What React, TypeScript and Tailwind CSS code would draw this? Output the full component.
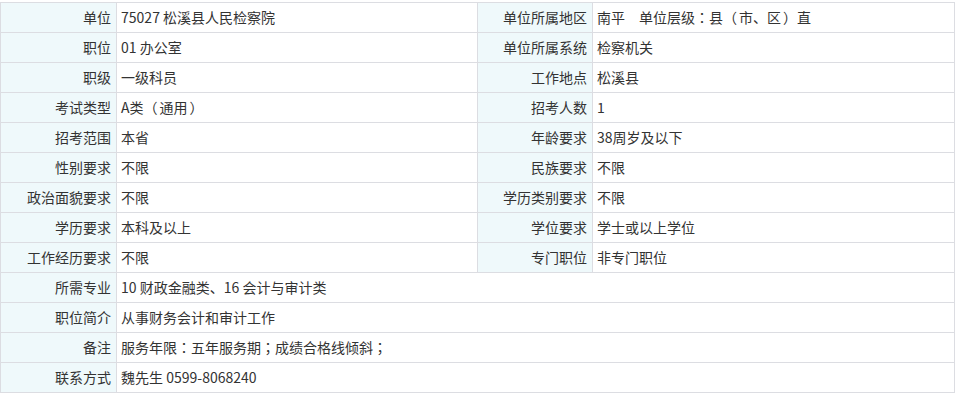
import React from "react";

// paired rows: [label, value, label, value]
const PAIRED_ROWS: [string, string, string, string][] = [
  ["单位", "75027 松溪县人民检察院", "单位所属地区", "南平　单位层级：县（市、区）直"],
  ["职位", "01 办公室", "单位所属系统", "检察机关"],
  ["职级", "一级科员", "工作地点", "松溪县"],
  ["考试类型", "A类（通用）", "招考人数", "1"],
  ["招考范围", "本省", "年龄要求", "38周岁及以下"],
  ["性别要求", "不限", "民族要求", "不限"],
  ["政治面貌要求", "不限", "学历类别要求", "不限"],
  ["学历要求", "本科及以上", "学位要求", "学士或以上学位"],
  ["工作经历要求", "不限", "专门职位", "非专门职位"],
];

const WIDE_ROWS: [string, string][] = [
  ["所需专业", "10 财政金融类、16 会计与审计类"],
  ["职位简介", "从事财务会计和审计工作"],
  ["备注", "服务年限：五年服务期；成绩合格线倾斜；"],
  ["联系方式", "魏先生 0599-8068240"],
];

const labelCls =
  "h-[30px] border border-[#dcdde2] bg-[#eff9fb] pr-[5px] text-right align-middle whitespace-nowrap";
const valueCls =
  "h-[30px] border border-[#dcdde2] bg-white pl-[4px] text-left align-middle whitespace-nowrap";

// full-width punctuation sits centred in the reference font, Noto SC pushes it aside
function Value({ text }: { text: string }) {
  return (
    <>
      {Array.from(text).map((ch, i) => {
        if (ch === "：" || ch === "；") {
          return (
            <span key={i} style={{ fontFamily: '"Noto Sans CJK JP", sans-serif' }}>
              {ch}
            </span>
          );
        }
        if (ch === "（") {
          return (
            <span key={i} className="pr-[2px]">
              {ch}
            </span>
          );
        }
        if (ch === "）") {
          return (
            <span key={i} className="pl-[2px]">
              {ch}
            </span>
          );
        }
        return ch;
      })}
    </>
  );
}

export default function App() {
  return (
    <div
      className="min-h-screen bg-white pt-[2px] text-[14px] text-[#333333]"
      style={{ fontFamily: '"Noto Sans CJK SC", "Noto Sans", sans-serif' }}
    >
      <table className="w-[954px] table-fixed border-collapse">
        <colgroup>
          <col className="w-[116px]" />
          <col className="w-[361px]" />
          <col className="w-[115px]" />
          <col className="w-[362px]" />
        </colgroup>
        <tbody>
          {PAIRED_ROWS.map(([l1, v1, l2, v2]) => (
            <tr key={l1}>
              <td className={labelCls}>{l1}</td>
              <td className={valueCls}>
                <Value text={v1} />
              </td>
              <td className={labelCls}>{l2}</td>
              <td className={valueCls}>
                <Value text={v2} />
              </td>
            </tr>
          ))}
          {WIDE_ROWS.map(([label, value]) => (
            <tr key={label}>
              <td className={labelCls}>{label}</td>
              <td className={valueCls} colSpan={3}>
                <Value text={value} />
              </td>
            </tr>
          ))}
        </tbody>
      </table>
    </div>
  );
}
